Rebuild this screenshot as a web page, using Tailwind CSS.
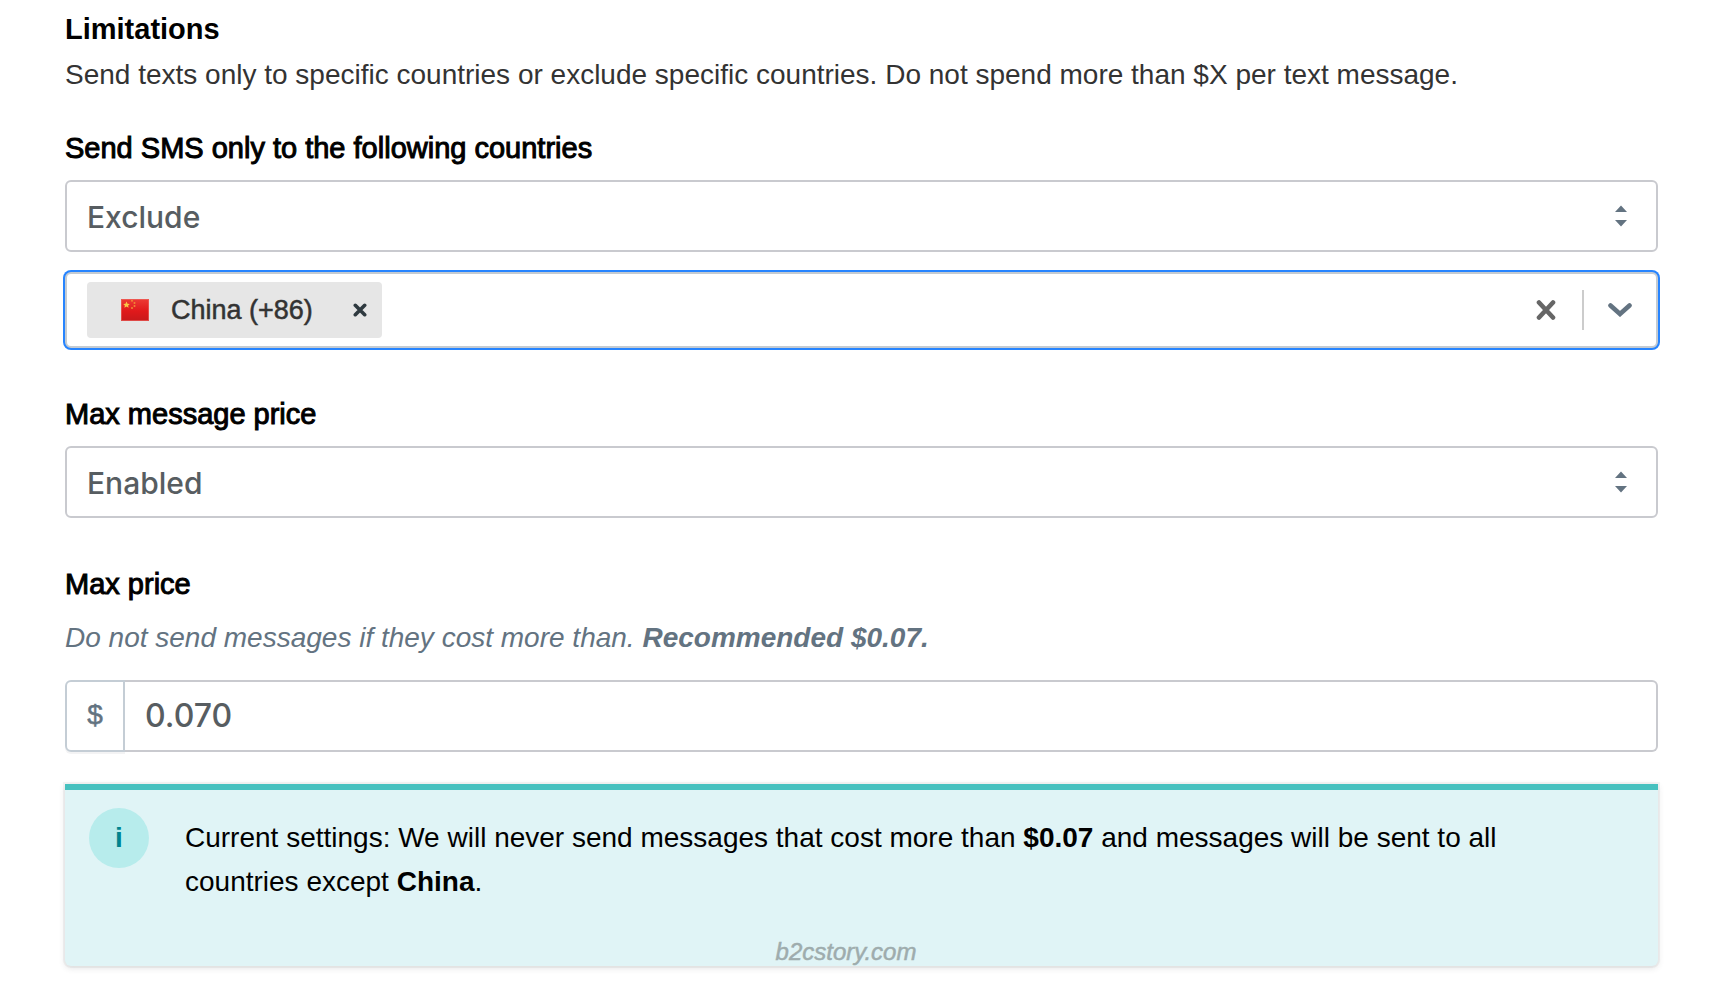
<!DOCTYPE html>
<html lang="en">
<head>
<meta charset="utf-8">
<meta name="viewport" content="width=device-width, initial-scale=1">
<title>Limitations</title>
<script src="https://cdn.jsdelivr.net/npm/@tailwindcss/browser@4"></script>
</head>
<body class="bg-white text-black font-['Liberation_Sans',Arial,sans-serif] text-[28px] leading-[44px]">
<main class="relative pl-[65px] pr-[58px] pt-[7px] pb-4">
  <h1 class="text-[29px] leading-[44px] font-bold">Limitations</h1>
  <p class="mt-0.5 text-[#333333]">Send texts only to specific countries or exclude specific countries. Do not spend more than $X per text message.</p>

  <form>
    <section class="mt-[29px] flex flex-col">
      <label for="mode" class="text-[29px] leading-[44px] [-webkit-text-stroke:1px_#000]">Send SMS only to the following countries</label>
      <div class="mt-2.5 grid items-center">
        <select id="mode" class="col-start-1 row-start-1 h-[72px] w-full appearance-none rounded-md border-2 border-[#c9cacf] bg-white px-5 pt-0.5 font-['Inter',sans-serif] text-[30px] font-medium text-[#575d61]">
          <option>Exclude</option>
          <option>Include</option>
        </select>
        <svg class="pointer-events-none col-start-1 row-start-1 mr-[31px] justify-self-end" width="12" height="22" viewBox="0 0 12 22" fill="#637381" aria-hidden="true"><path d="M0 7 6 0.500 12 7zM0 15h12L6 21.500z"/></svg>
      </div>

      <div class="mt-5 flex min-h-[76px] items-center rounded-md border-2 border-[#c4cbd2] bg-white pl-5 ring-2 ring-[#2684ff]">
        <span class="flex h-14 items-center rounded bg-[#e6e6e6] pl-[34px] pr-[15px] text-[27px] text-[#333333]">
          <svg width="28" height="22" viewBox="0 0 28 22" aria-hidden="true">
            <defs><linearGradient id="red" x2="0" y2="1"><stop stop-color="#ed3b35"/><stop offset=".55" stop-color="#e0191b"/><stop offset="1" stop-color="#c7191b"/></linearGradient></defs>
            <rect width="28" height="22" fill="url(#red)"/>
            <rect x=".5" y=".5" width="27" height="21" fill="none" stroke="#ee6b66" stroke-opacity=".6"/>
            <path fill="#f9c846" d="m5.500 2.500 1 2.200 2.300.2-1.700 1.500.5 2.300-2.100-1.200-2.100 1.200.5-2.300-1.700-1.500 2.300-.2z"/>
            <g fill="#f08a35"><circle cx="11" cy="1.800" r="1"/><circle cx="13.500" cy="4" r="1"/><circle cx="13.500" cy="7" r="1"/><circle cx="11" cy="9" r="1"/></g>
          </svg>
          <span class="ml-[22px] [-webkit-text-stroke:0.500px_#333]">China (+86)</span>
          <button type="button" aria-label="Remove China" class="ml-10 flex"><svg width="14" height="14" viewBox="0 0 14 14" fill="none" stroke="#2f3a40" stroke-width="3.600" stroke-linecap="round"><path d="m2.300 2.300 9.400 9.400m0-9.400-9.400 9.400"/></svg></button>
        </span>
        <input type="text" aria-label="Countries" class="h-14 min-w-0 flex-1 px-2 outline-none">
        <button type="button" aria-label="Clear all" class="flex"><svg width="20" height="22" viewBox="0 0 20 22" fill="none" stroke="#666" stroke-width="4.600" stroke-linecap="round"><path d="m3 3.500 14 15m0-15-14 15"/></svg></button>
        <span class="ml-[26px] h-10 w-0.5 bg-[#cccccc]"></span>
        <button type="button" aria-label="Open list" class="mx-6 flex"><svg width="24" height="14" viewBox="0 0 24 14" fill="none" stroke="#637381" stroke-width="4.600" stroke-linecap="round"><path d="m2.500 2.500 9.500 8.500 9.500-8.500"/></svg></button>
      </div>
    </section>

    <section class="mt-11 flex flex-col">
      <label for="limit" class="text-[29px] leading-[44px] [-webkit-text-stroke:1px_#000]">Max message price</label>
      <div class="mt-2.5 grid items-center">
        <select id="limit" class="col-start-1 row-start-1 h-[72px] w-full appearance-none rounded-md border-2 border-[#c9cacf] bg-white px-5 pt-0.5 font-['Inter',sans-serif] text-[30px] font-medium text-[#575d61]">
          <option>Enabled</option>
          <option>Disabled</option>
        </select>
        <svg class="pointer-events-none col-start-1 row-start-1 mr-[31px] justify-self-end" width="12" height="22" viewBox="0 0 12 22" fill="#637381" aria-hidden="true"><path d="M0 7 6 0.500 12 7zM0 15h12L6 21.500z"/></svg>
      </div>
    </section>

    <section class="mt-11 flex flex-col">
      <label for="price" class="text-[29px] leading-[44px] [-webkit-text-stroke:1px_#000]">Max price</label>
      <p id="price-help" class="mt-2.5 italic text-[#637381]">Do not send messages if they cost more than. <strong>Recommended $0.07.</strong></p>
      <div class="mt-5 flex h-[72px]">
        <span class="flex w-[60px] items-center justify-center rounded-l-md border-2 border-[#c4cdd5] pb-0.5 text-[#637381] shadow-[0_2px_0_rgba(22,29,37,0.05)] [-webkit-text-stroke:0.500px_#637381]">$</span>
        <input id="price" type="text" inputmode="decimal" value="0.070" aria-describedby="price-help" class="min-w-0 flex-1 rounded-r-md border-2 border-l-0 border-[#c9cacf] px-5 font-['Inter',sans-serif] text-[32px] font-medium text-[#575d61] outline-none">
      </div>
    </section>
  </form>

  <section class="mt-8 flex min-h-[182px] rounded-b-md border-t-[6px] border-[#47c1bf] bg-[#e0f4f6] pl-6 pr-6 shadow-[0_0_0_2px_rgba(63,63,68,0.05),0_2px_6px_0_rgba(63,63,68,0.15)]">
    <span class="mt-[18px] flex size-[60px] shrink-0 items-center justify-center rounded-full bg-[#b7ecec] font-bold text-[#00848e]">i</span>
    <p class="ml-9 max-w-[1360px] pt-[26px]">Current settings: We will never send messages that cost more than <strong>$0.07</strong> and messages will be sent to all countries except <strong>China</strong>.</p>
  </section>

  <!-- Site credit laid over the banner's lower edge -->
  <span class="absolute inset-x-0 bottom-4 mr-[24px] text-center text-[24px] leading-[28px] italic text-[#9eacad] [-webkit-text-stroke:0.500px_#9eacad]">b2cstory.com</span>
</main>
</body>
</html>
